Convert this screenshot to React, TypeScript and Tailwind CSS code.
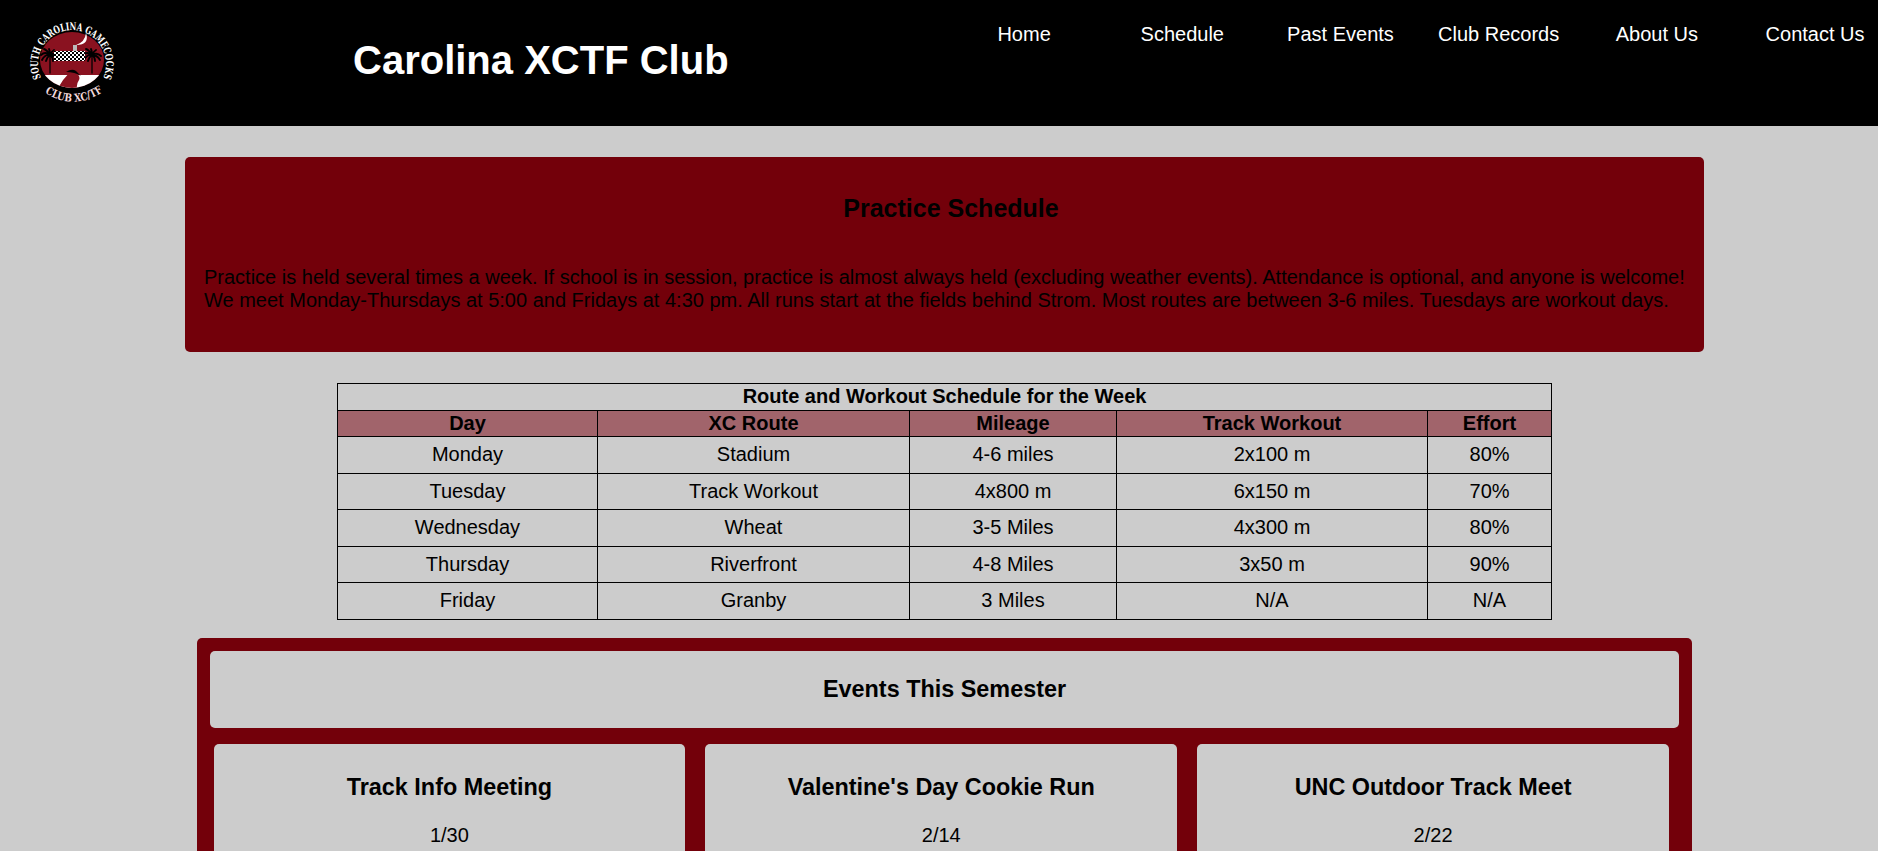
import React from "react";

const navLinks = ["Home", "Schedule", "Past Events", "Club Records", "About Us", "Contact Us"];

const weekRows = [
  ["Monday", "Stadium", "4-6 miles", "2x100 m", "80%"],
  ["Tuesday", "Track Workout", "4x800 m", "6x150 m", "70%"],
  ["Wednesday", "Wheat", "3-5 Miles", "4x300 m", "80%"],
  ["Thursday", "Riverfront", "4-8 Miles", "3x50 m", "90%"],
  ["Friday", "Granby", "3 Miles", "N/A", "N/A"],
];

const headings = ["Day", "XC Route", "Mileage", "Track Workout", "Effort"];

const events = [
  { title: "Track Info Meeting", date: "1/30" },
  { title: "Valentine's Day Cookie Run", date: "2/14" },
  { title: "UNC Outdoor Track Meet", date: "2/22" },
];

const Palm: React.FC<{ x: number }> = ({ x }) => (
  <g stroke="#000" fill="none" strokeLinecap="round">
    <path d={`M${x} 55 L${x} 73`} strokeWidth="1.3" />
    <path
      d={`M${x} 55 q-5 -4 -9 0 M${x} 55 q-5 -1 -8 5 M${x} 55 q-3 2 -4 6 M${x} 55 q-3 -5 -6 -6 M${x} 55 q0 -4 -1 -6 M${x} 55 q2 -4 4 -5 M${x} 55 q5 -3 9 1 M${x} 55 q5 0 8 5 M${x} 55 q3 2 3 6`}
      strokeWidth="1.9"
    />
  </g>
);

const Logo: React.FC = () => (
  <svg width="140" height="126" viewBox="0 0 140 126" className="block">
    <defs>
      <pattern id="checks" width="4" height="4" patternUnits="userSpaceOnUse" x="54" y="50">
        <rect width="4" height="4" fill="#fff" />
        <rect width="2" height="2" fill="#000" />
        <rect x="2" y="2" width="2" height="2" fill="#000" />
      </pattern>
      <clipPath id="seal">
        <ellipse cx="72" cy="60" rx="32" ry="28" />
      </clipPath>
      <path id="topArc" d="M 41 78 A 34 34 0 1 1 103 78" />
      <path id="bottomArc" d="M 44 92 Q 74 112 104 91" />
    </defs>
    <ellipse cx="72" cy="60" rx="32" ry="28" fill="#8a1220" />
    <g clipPath="url(#seal)">
      <path d="M38 75 L106 75 L106 92 L38 92 Z" fill="#fff" />
      <path d="M57 90 Q62 80 70 72 L75 72 Q81 76 79 80 Q76 84 77 90 Z" fill="#8a1220" />
      <path d="M66 72 Q72 68 76 71 L81 76 Q75 72 66 72 Z" fill="#000" />
    </g>
    <Palm x={50} />
    <Palm x={92} />
    <rect x="54" y="51" width="31" height="10" fill="url(#checks)" />
    <rect x="73" y="45" width="4" height="6" fill="#bbb" />
    <path d="M86 33 Q90 45 76 45 Q85 42 86 33 Z" fill="#fff" />
    <text fill="#fff" fontFamily="'DejaVu Serif', serif" fontWeight="700" fontSize="10.5">
      <textPath href="#topArc" textLength="135" lengthAdjust="spacingAndGlyphs">
        SOUTH CAROLINA GAMECOCKS
      </textPath>
    </text>
    <text fill="#f3d9dc" fontFamily="'DejaVu Serif', serif" fontWeight="700" fontSize="11">
      <textPath href="#bottomArc" startOffset="1" textLength="62" lengthAdjust="spacingAndGlyphs">
        CLUB XC/TF
      </textPath>
    </text>
  </svg>
);

const App: React.FC = () => {
  return (
    <div className="h-[851px] overflow-hidden bg-[#cccccc] text-[20px] text-black font-['Liberation_Sans',Arial,sans-serif]">
      <header className="flex h-[126px] overflow-hidden bg-black text-white">
        <div className="w-[353px] shrink-0">
          <Logo />
        </div>
        <h1 className="w-[592px] shrink-0 pt-[37px] text-[40px] font-bold leading-[46px]">Carolina XCTF Club</h1>
        <nav className="flex shrink-0 pt-[23px]">
          {navLinks.map((link) => (
            <a key={link} className="w-[158.2px] text-center leading-[23px]">
              {link}
            </a>
          ))}
        </nav>
      </header>

      <section className="ml-[185px] mt-[31px] h-[195px] w-[1519px] rounded-[5px] bg-[#73000a] px-[19px] pt-[37px]">
        <h2 className="mb-[43px] pl-[13px] text-center text-[25px] font-bold leading-[29px]">Practice Schedule</h2>
        <p className="leading-[23px]">
          Practice is held several times a week. If school is in session, practice is almost always held (excluding
          weather events). Attendance is optional, and anyone is welcome! We meet Monday-Thursdays at 5:00 and Fridays
          at 4:30 pm. All runs start at the fields behind Strom. Most routes are between 3-6 miles. Tuesdays are workout
          days.
        </p>
      </section>

      <table className="ml-[337px] mt-[31px] w-[1214px] table-fixed border-collapse text-center">
        <colgroup>
          <col className="w-[260px]" />
          <col className="w-[312px]" />
          <col className="w-[207px]" />
          <col className="w-[311px]" />
          <col className="w-[124px]" />
        </colgroup>
        <thead>
          <tr className="h-[27px]">
            <th colSpan={5} className="border border-black p-0 pb-[2px] font-bold leading-[23px]">
              Route and Workout Schedule for the Week
            </th>
          </tr>
          <tr className="h-[26px] bg-[#a1646b]">
            {headings.map((h) => (
              <th key={h} className="border border-black p-0 font-bold leading-[23px]">
                {h}
              </th>
            ))}
          </tr>
        </thead>
        <tbody>
          {weekRows.map((row) => (
            <tr key={row[0]} className="h-[36.5px]">
              {row.map((cell, idx) => (
                <td key={idx} className="border border-black p-0 leading-[23px]">
                  {cell}
                </td>
              ))}
            </tr>
          ))}
        </tbody>
      </table>

      <section className="ml-[197px] mt-[18px] w-[1495px] rounded-[5px] bg-[#73000a] p-[13px]">
        <div className="flex h-[77px] items-center justify-center rounded-[5px] bg-[#cccccc] pt-[1px] text-[23.4px] font-bold">
          Events This Semester
        </div>
        <div className="mt-[16px] flex gap-[20px] pl-[3.5px] pr-[10px]">
          {events.map((ev) => (
            <div key={ev.title} className="h-[300px] flex-1 rounded-[5px] bg-[#cccccc] pt-[30px] text-center">
              <h3 className="text-[23.4px] font-bold leading-[26px]">{ev.title}</h3>
              <p className="mt-[24px] leading-[23px]">{ev.date}</p>
            </div>
          ))}
        </div>
      </section>
    </div>
  );
};

export default App;
